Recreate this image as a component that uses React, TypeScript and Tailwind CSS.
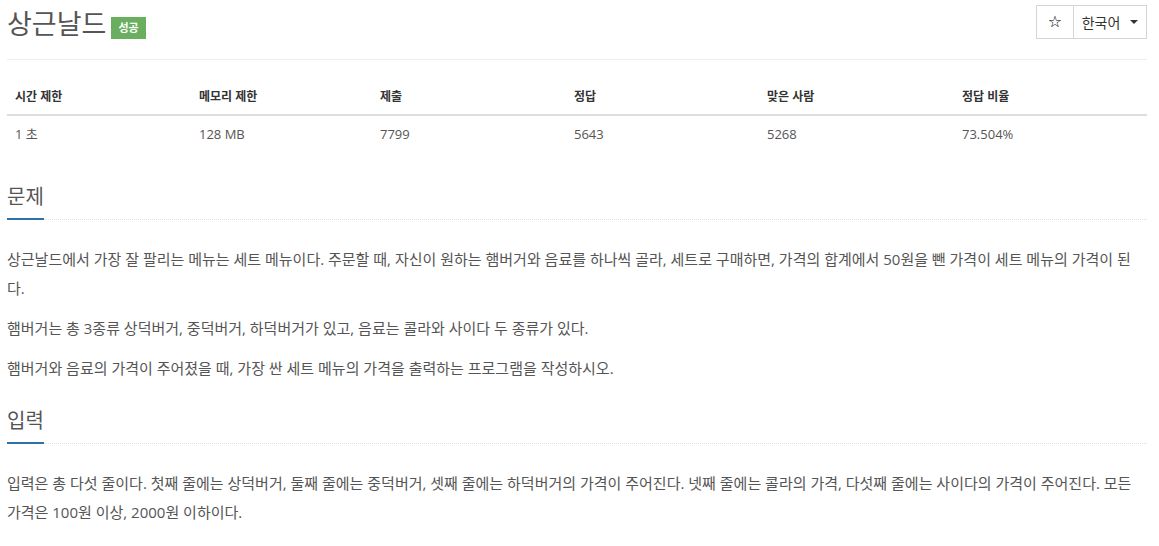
import React from 'react';

const font = { fontFamily: '"Open Sans", "Noto Sans CJK KR", sans-serif' };

const stats = [
  { label: '시간 제한', value: '1 초' },
  { label: '메모리 제한', value: '128 MB' },
  { label: '제출', value: '7799' },
  { label: '정답', value: '5643' },
  { label: '맞은 사람', value: '5268' },
  { label: '정답 비율', value: '73.504%' },
];

function SectionTitle({ children }: { children: React.ReactNode }) {
  return (
    <div className="border-b border-dotted border-[#dddddd] mb-[25px]">
      <span className="inline-block text-[20px] leading-[24px] text-[#555555] pb-[9px] border-b-2 border-[#3071a9] -mb-px">
        {children}
      </span>
    </div>
  );
}

export default function App() {
  return (
    <div className="bg-white w-[1159px] min-h-[546px] pl-[7px] pr-[12px] text-[#555555]" style={font}>
      {/* Header */}
      <div className="flex items-start h-[60px] border-b border-[#eeeeee]">
        <h1 className="mt-[8px] text-[27px] leading-[32px] font-normal text-[#555555]">상근날드</h1>
        <span className="ml-[5px] mt-[17px] h-[22px] px-[7px] flex items-center bg-[#6aaf5f] text-white text-[11px] font-bold">
          성공
        </span>
        <div className="ml-auto mt-[5px] flex h-[34px] text-[14px] text-[#333333]">
          <button className="w-[38px] border border-[#d5d5d5] flex items-center justify-center bg-white">
            <span style={{ fontFamily: '"DejaVu Sans", sans-serif' }} className="text-[16px] text-black">☆</span>
          </button>
          <button className="w-[74px] -ml-px border border-[#d5d5d5] flex items-center justify-center gap-[10px] bg-white">
            <span>한국어</span>
            <span className="w-0 h-0 border-l-[4px] border-r-[4px] border-t-[4px] border-l-transparent border-r-transparent border-t-[#333333]" />
          </button>
        </div>
      </div>

      {/* Stats table */}
      <div className="mt-[20px] mb-[33px] text-[13px]">
        <div className="grid grid-cols-[184px_181px_194px_193px_195px_193px] border-b-2 border-[#dddddd]">
          {stats.map((s) => (
            <div key={s.label} className="px-[8px] py-[8px] leading-[18px] text-[12px] font-bold text-[#333333]">
              {s.label}
            </div>
          ))}
        </div>
        <div className="grid grid-cols-[184px_181px_194px_193px_195px_193px]">
          {stats.map((s) => (
            <div key={s.label} className="px-[8px] py-[8px] leading-[20px]">
              {s.value}
            </div>
          ))}
        </div>
      </div>

      {/* Problem */}
      <section className="pb-[26px]">
        <SectionTitle>문제</SectionTitle>
        <div className="text-[15px] leading-[29px] flex flex-col gap-[11px]">
          <p>
            상근날드에서 가장 잘 팔리는 메뉴는 세트 메뉴이다. 주문할 때, 자신이 원하는 햄버거와 음료를 하나씩 골라, 세트로 구매하면, 가격의 합계에서 50원을 뺀 가격이 세트 메뉴의 가격이 된다.
          </p>
          <p>햄버거는 총 3종류 상덕버거, 중덕버거, 하덕버거가 있고, 음료는 콜라와 사이다 두 종류가 있다.</p>
          <p>햄버거와 음료의 가격이 주어졌을 때, 가장 싼 세트 메뉴의 가격을 출력하는 프로그램을 작성하시오.</p>
        </div>
      </section>

      {/* Input */}
      <section className="pb-[26px]">
        <SectionTitle>입력</SectionTitle>
        <div className="text-[15px] leading-[29px]">
          <p>
            입력은 총 다섯 줄이다. 첫째 줄에는 상덕버거, 둘째 줄에는 중덕버거, 셋째 줄에는 하덕버거의 가격이 주어진다. 넷째 줄에는 콜라의 가격, 다섯째 줄에는 사이다의 가격이 주어진다. 모든 가격은 100원 이상, 2000원 이하이다.
          </p>
        </div>
      </section>
    </div>
  );
}
